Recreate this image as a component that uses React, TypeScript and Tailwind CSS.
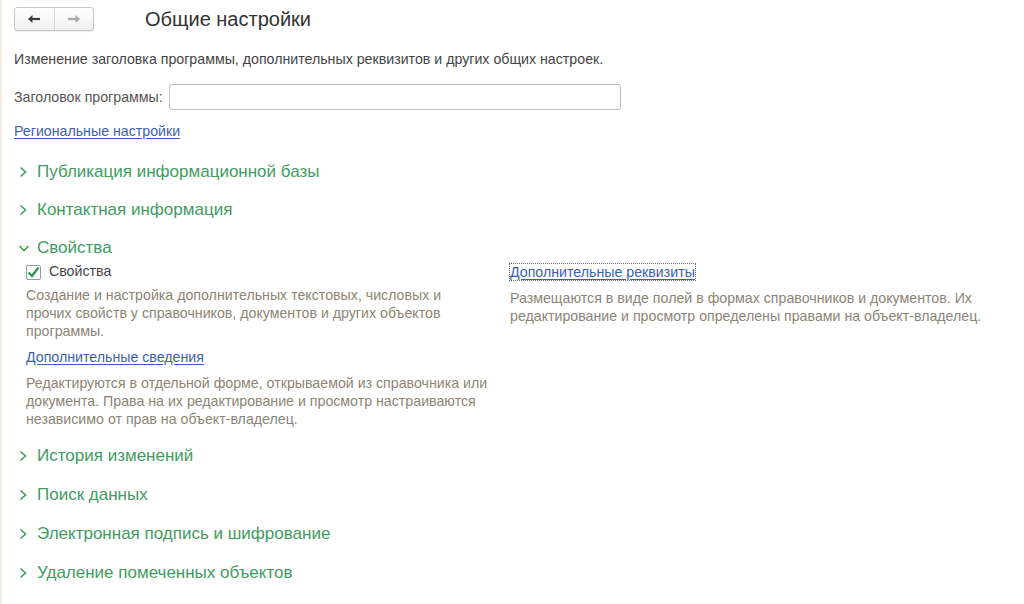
import { useState } from "react";

const collapsedTop = ["Публикация информационной базы", "Контактная информация"];
const collapsedBottom = [
  "История изменений",
  "Поиск данных",
  "Электронная подпись и шифрование",
  "Удаление помеченных объектов",
];

function ChevronRight() {
  return (
    <svg width="10" height="12" viewBox="0 0 10 12" className="shrink-0">
      <path d="M2.5 1.5 L7.5 6 L2.5 10.5" fill="none" stroke="#3f9c62" strokeWidth="1.6" />
    </svg>
  );
}

function ChevronDown() {
  return (
    <svg width="12" height="10" viewBox="0 0 12 10" className="shrink-0">
      <path d="M1.5 3 L6 7.5 L10.5 3" fill="none" stroke="#3f9c62" strokeWidth="1.6" />
    </svg>
  );
}

function Group({ title, open }: { title: string; open?: boolean }) {
  return (
    <div className="flex items-center gap-[9px] h-[20px] pl-[4px] text-[17px] text-[#3f9c62] leading-[20px]">
      {open ? <ChevronDown /> : <ChevronRight />}
      <span className={open ? "-ml-[2px]" : ""}>{title}</span>
    </div>
  );
}

export default function App() {
  const [checked, setChecked] = useState(true);

  return (
    <div className="w-[1024px] h-[604px] bg-white border-l-2 border-[#f1ede4] font-['Liberation_Sans',Arial,sans-serif] text-[#333] overflow-hidden">
      <div className="pl-[12px] pt-[7px]">
        {/* header */}
        <div className="flex items-center h-[24px]">
          <div className="flex h-[24px] w-[80px] rounded-[3px] border border-[#c8c8c8] bg-gradient-to-b from-white to-[#f0f0f0] shadow-[0_1px_1px_rgba(0,0,0,0.08)]">
            <div className="flex-1 flex items-center justify-center border-r border-[#d6d6d6]">
              <svg width="14" height="10" viewBox="0 0 14 10">
                <path d="M13 5 H4" stroke="#3c3c3c" strokeWidth="2.2" />
                <path d="M5.5 1 L1 5 L5.5 9 Z" fill="#3c3c3c" />
              </svg>
            </div>
            <div className="flex-1 flex items-center justify-center">
              <svg width="14" height="10" viewBox="0 0 14 10">
                <path d="M1 5 H10" stroke="#a8a8a8" strokeWidth="2.2" />
                <path d="M8.5 1 L13 5 L8.5 9 Z" fill="#a8a8a8" />
              </svg>
            </div>
          </div>
          <h1 className="ml-[51px] text-[20px] text-[#333] leading-[24px]">Общие настройки</h1>
        </div>

        <p className="mt-[20px] text-[14.2px] leading-[16px] text-[#444]">
          Изменение заголовка программы, дополнительных реквизитов и других общих настроек.
        </p>

        <div className="mt-[17px] flex items-center">
          <label className="text-[14.2px] text-[#555] leading-[16px]">Заголовок программы:</label>
          <input className="ml-[6px] w-[452px] h-[26px] rounded-[3px] border border-[#bdbdbd] bg-white outline-none" />
        </div>

        <a className="block mt-[13px] text-[14.2px] leading-[16px] text-[#3c5fae] underline underline-offset-2">
          Региональные настройки
        </a>

        <div className="mt-[23px] flex flex-col gap-[18px]">
          {collapsedTop.map((t) => (
            <Group key={t} title={t} />
          ))}
          <Group title="Свойства" open />
        </div>

        {/* expanded group */}
        <div className="grid grid-cols-[484px_1fr] pl-[12px]">
          <div>
            <label className="mt-[6px] flex items-center gap-[8px] h-[16px] cursor-pointer" onClick={() => setChecked(!checked)}>
              <span className="w-[15px] h-[15px] border border-[#9a9a9a] rounded-[2px] bg-white flex items-center justify-center">
                {checked && (
                  <svg width="13" height="12" viewBox="0 0 13 12">
                    <path d="M1.5 6.5 L5 10 L11.5 1.5" fill="none" stroke="#2f9a4e" strokeWidth="2.4" />
                  </svg>
                )}
              </span>
              <span className="text-[14.2px] text-[#444]">Свойства</span>
            </label>
            <p className="mt-[6px] text-[14.2px] leading-[18px] text-[#8c8574]">
              Создание и настройка дополнительных текстовых, числовых и
              <br />
              прочих свойств у справочников, документов и других объектов
              <br />
              программы.
            </p>
            <a className="block mt-[9px] text-[14.2px] leading-[16px] text-[#3c5fae] underline underline-offset-2">
              Дополнительные сведения
            </a>
            <p className="mt-[9px] text-[14.2px] leading-[18px] text-[#8c8574]">
              Редактируются в отдельной форме, открываемой из справочника или
              <br />
              документа. Права на их редактирование и просмотр настраиваются
              <br />
              независимо от прав на объект-владелец.
            </p>
          </div>
          <div>
            <a className="inline-block mt-[6px] text-[14.2px] leading-[16px] text-[#3c5fae] underline underline-offset-2 outline-1 outline-dotted outline-[#666]">
              Дополнительные реквизиты
            </a>
            <p className="mt-[5px] text-[14.2px] leading-[18px] text-[#8c8574]">
              Размещаются в виде полей в формах справочников и документов. Их
              <br />
              редактирование и просмотр определены правами на объект-владелец.
            </p>
          </div>
        </div>

        <div className="mt-[18px] flex flex-col gap-[19px]">
          {collapsedBottom.map((t) => (
            <Group key={t} title={t} />
          ))}
        </div>
      </div>
    </div>
  );
}
